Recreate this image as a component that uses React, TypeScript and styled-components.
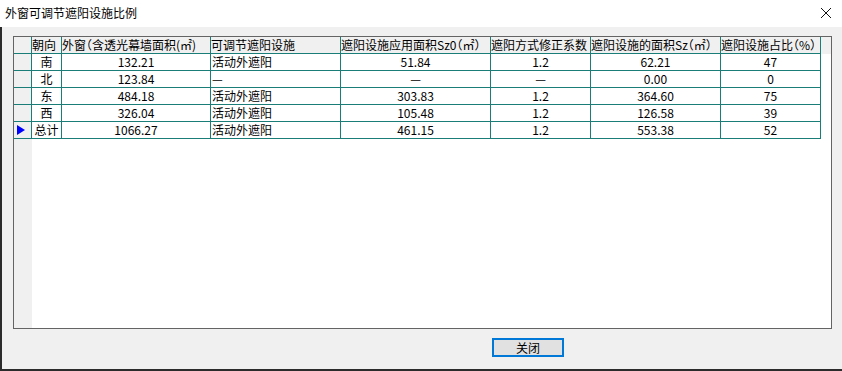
import React from 'react';
import styled, {createGlobalStyle} from "styled-components";

const GlobalStyle = createGlobalStyle`
  html, body {
    margin: 0;
    padding: 0;
    background: #f0f0f0;
  }

  body {
    font-family: "SimSun", "Noto Sans CJK SC", "Liberation Sans", sans-serif;
    font-size: 12px;
    color: #000;
  }
`;

const columns = [
    {title: "朝向", width: 30, align: "center"},
    {title: "外窗（含透光幕墙面积(㎡)", width: 149, align: "center"},
    {title: "可调节遮阳设施", width: 130, align: "left"},
    {title: "遮阳设施应用面积Sz0（㎡）", width: 150, align: "center"},
    {title: "遮阳方式修正系数", width: 100, align: "center"},
    {title: "遮阳设施的面积Sz（㎡）", width: 130, align: "center"},
    {title: "遮阳设施占比（%）", width: 100, align: "center"},
];

const rows = [
    ["南", "132.21", "活动外遮阳", "51.84", "1.2", "62.21", "47"],
    ["北", "123.84", "—", "—", "—", "0.00", "0"],
    ["东", "484.18", "活动外遮阳", "303.83", "1.2", "364.60", "75"],
    ["西", "326.04", "活动外遮阳", "105.48", "1.2", "126.58", "39"],
    ["总计", "1066.27", "活动外遮阳", "461.15", "1.2", "553.38", "52"],
];

const template = `18px ${columns.map(c => c.width + "px").join(" ")} 1fr`;

export default function App() {
    return (
        <>
            <GlobalStyle/>
            <Window>
                <TitleBar>
                    <Title>外窗可调节遮阳设施比例</Title>
                    <CloseButton>
                        <svg width="12" height="12" viewBox="0 0 12 12">
                            <path d="M1 1 L11 11 M11 1 L1 11" stroke="#111" strokeWidth="1"/>
                        </svg>
                    </CloseButton>
                </TitleBar>

                <Body>
                    <Grid>
                        <Row>
                            <RowHeader/>
                            {columns.map(c => (
                                <Cell key={c.title} $head $align="left">{c.title}</Cell>
                            ))}
                            <Filler $head/>
                        </Row>

                        {rows.map((r, i) => (
                            <Row key={r[0]}>
                                <RowHeader>
                                    {i === rows.length - 1 && <Arrow/>}
                                </RowHeader>
                                {r.map((v, j) => (
                                    <Cell key={j} $align={columns[j].align}>{v}</Cell>
                                ))}
                                <Filler/>
                            </Row>
                        ))}
                    </Grid>

                    <Footer>
                        <Button>关闭</Button>
                    </Footer>
                </Body>
            </Window>
        </>
    );
}

const Window = styled.div`
  width: 842px;
  height: 371px;
  display: flex;
  flex-direction: column;
  background: #f0f0f0;
  overflow: hidden;
`;

const TitleBar = styled.div`
  height: 27px;
  flex: none;
  display: flex;
  align-items: center;
  justify-content: space-between;
  padding: 0 10px 0 5px;
  background: #fff;
`;

const Title = styled.div`
  font-size: 12px;
  line-height: 14px;
  color: #000;
  padding-bottom: 2px;
`;

const CloseButton = styled.div`
  width: 12px;
  height: 12px;
  display: flex;
  margin-bottom: 2px;
`;

const Body = styled.div`
  flex: 1;
  display: flex;
  flex-direction: column;
  padding: 9px 0 0 11px;
  border-left: 2px solid #2b2b2b;
  border-bottom: 2px solid #2b2b2b;
`;

const Grid = styled.div`
  width: 817px;
  height: 291px;
  flex: none;
  border: 1px solid #646464;
  background: linear-gradient(to right, #f0f0f0 18px, #fff 18px);
  overflow: hidden;
`;

const Row = styled.div`
  display: grid;
  grid-template-columns: ${template};
  height: 17px;
`;

const RowHeader = styled.div`
  position: relative;
  background: #f0f0f0;
  border-right: 1px solid #1b7d78;
  border-bottom: 1px solid #1b7d78;
`;

const Arrow = styled.span`
  position: absolute;
  left: 3px;
  top: 3px;
  width: 0;
  height: 0;
  border-top: 5px solid transparent;
  border-bottom: 5px solid transparent;
  border-left: 8px solid #0000ff;
`;

const Cell = styled.div<{ $head?: boolean; $align?: string }>`
  display: flex;
  align-items: center;
  justify-content: ${p => p.$align === "left" ? "flex-start" : "center"};
  padding: 0 ${p => p.$head ? 0 : 1}px;
  overflow: hidden;
  white-space: nowrap;
  line-height: 16px;
  font-feature-settings: ${p => p.$head ? '"halt"' : 'normal'};
  background: ${p => p.$head ? "#f0f0f0" : "#fff"};
  border-right: 1px solid #1b7d78;
  border-bottom: 1px solid #1b7d78;
`;

const Filler = styled.div<{ $head?: boolean }>`
  background: ${p => p.$head ? "#f0f0f0" : "#fff"};
`;

const Footer = styled.div`
  display: flex;
  padding: 9px 0 0 479px;
`;

const Button = styled.button`
  width: 72px;
  height: 19px;
  padding: 0;
  border: 2px solid #0078d7;
  background: #e1e1e1;
  font-family: inherit;
  font-size: 12px;
  line-height: 14px;
  color: #000;
`;
